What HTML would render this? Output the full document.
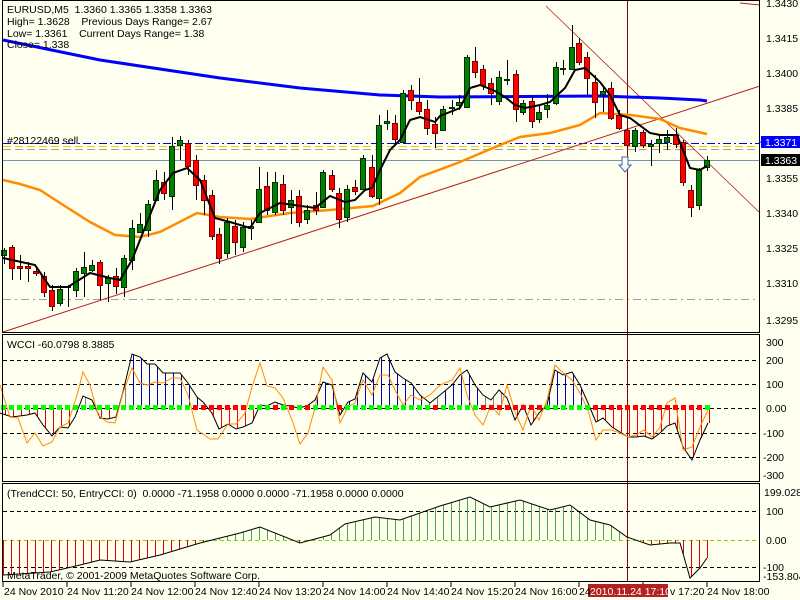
<!DOCTYPE html>
<html><head><meta charset="utf-8"><style>
html,body{margin:0;padding:0;background:#fffff0;width:800px;height:600px;overflow:hidden}
svg{display:block}
text{font-family:"Liberation Sans",sans-serif;font-size:10.5px;fill:#000;white-space:pre}
</style></head><body>
<svg id="s" width="800" height="600" xmlns="http://www.w3.org/2000/svg" shape-rendering="crispEdges">
<rect width="800" height="600" fill="#fffff0"/>
<g id="g"></g>
<rect x="2.5" y="0.5" width="757" height="332" fill="none" stroke="#000"/>
<rect x="2.5" y="334.5" width="757" height="147" fill="none" stroke="#000"/>
<rect x="2.5" y="483.5" width="757" height="98" fill="none" stroke="#000"/>
<text x="7" y="13">EURUSD,M5  1.3360 1.3365 1.3358 1.3363</text>
<text x="7" y="25">High= 1.3628    Previous Days Range= 2.67</text>
<text x="7" y="37">Low= 1.3361    Current Days Range= 1.38</text>
<text x="7" y="48">Close= 1.338</text>
<text x="7" y="144">#28122469 sell</text>
<text x="7" y="348">WCCI -60.0798 8.3885</text>
<text x="7" y="497">(TrendCCI: 50, EntryCCI: 0)  0.0000 -71.1958 0.0000 0.0000 -71.1958 0.0000 0.0000</text>
<text x="7" y="579">MetaTrader, © 2001-2009 MetaQuotes Software Corp.</text>
<g>
<text x="766" y="7">1.3430</text>
<text x="766" y="42">1.3415</text>
<text x="766" y="77">1.3400</text>
<text x="766" y="112">1.3385</text>
<rect x="761" y="136" width="39" height="12" fill="#0000ff"/>
<text x="765" y="146" style="fill:#fff">1.3371</text>
<rect x="761" y="154" width="39" height="12" fill="#000"/>
<text x="765" y="164" style="fill:#fff">1.3363</text>
<text x="766" y="182">1.3355</text>
<text x="766" y="217">1.3340</text>
<text x="766" y="252">1.3325</text>
<text x="766" y="287">1.3310</text>
<text x="766" y="324">1.3295</text>
<text x="766" y="346">300</text>
<text x="766" y="364">200</text>
<text x="766" y="388">100</text>
<text x="766" y="412">0.00</text>
<text x="763" y="437">-100</text>
<text x="763" y="461">-200</text>
<text x="763" y="479">-300</text>
<text x="764" y="496">199.0289</text>
<text x="766" y="515">100</text>
<text x="766" y="544">0.00</text>
<text x="763" y="571">-100</text>
<text x="763" y="580">-153.804</text>
</g>
<rect x="588" y="584" width="80" height="13" fill="#b22222"/>
<g>
<text x="4" y="595">24 Nov 2010</text>
<text x="67" y="595">24 Nov 11:20</text>
<text x="131" y="595">24 Nov 12:00</text>
<text x="195" y="595">24 Nov 12:40</text>
<text x="259" y="595">24 Nov 13:20</text>
<text x="323" y="595">24 Nov 14:00</text>
<text x="387" y="595">24 Nov 14:40</text>
<text x="451" y="595">24 Nov 15:20</text>
<text x="515" y="595">24 Nov 16:00</text>
<text x="579" y="595">24</text>
<text x="590" y="595" style="fill:#fff">2010.11.24 17:10</text>
<text x="670" y="595">v 17:20</text>
<text x="707" y="595">24 Nov 18:00</text>
</g>
</svg>
<script>
var g=document.getElementById('g');var NS='http://www.w3.org/2000/svg';
function el(t,a){var e=document.createElementNS(NS,t);for(var k in a)e.setAttribute(k,a[k]);g.appendChild(e);return e;}
function pl(pts,c,w,extra){var a={points:pts.map(function(p){return p.join(',')}).join(' '),fill:'none',stroke:c,'stroke-width':w,'shape-rendering':'auto'};for(var k in extra)a[k]=extra[k];return el('polyline',a);}
function hl(y,c,d){el('line',{x1:3,x2:760,y1:y,y2:y,stroke:c,'stroke-dasharray':d||''});}
for(var x=3;x<=707;x+=64){el('line',{x1:x,x2:x,y1:582,y2:587,stroke:'#000'});}
hl(160.5,'#7890a8');
hl(299.5,'#a0a0a0','8,4,2,4');
hl(149.5,'#a0a0a0','8,4');
hl(146.5,'#f0d000','8,4');
hl(143.5,'#0000ff','8,3,2,3');
el('line',{x1:760,x2:800,y1:142,y2:142,stroke:'#0000ff'});
[360,384,433,457].forEach(function(y){hl(y+.5,'#000','4,3')});
hl(408.5,'#000','4,3');
[511,567].forEach(function(y){hl(y+.5,'#000','4,3')});
el('line',{x1:3,x2:760,y1:540.5,y2:540.5,stroke:'#7fd000','stroke-dasharray':'4,3'});
el('line',{x1:627.5,x2:627.5,y1:0,y2:582,stroke:'#8b0000'});
el('line',{x1:3,y1:332,x2:760,y2:86,stroke:'#b22222','shape-rendering':'auto'});
el('line',{x1:546,y1:6,x2:760,y2:213,stroke:'#b22222','stroke-width':.8,'shape-rendering':'auto'});
el('line',{x1:740,y1:3,x2:760,y2:5,stroke:'#b22222','shape-rendering':'auto'});
pl([[3,40],[100,60],[220,78],[300,88],[380,95],[440,97],[600,96],[660,98],[700,100],[707,101]],'#0000ff',3);
pl([[3,180],[20,184],[40,190],[60,203],[90,222],[115,235],[140,237],[160,232],[197,213],[220,217],[250,219],[290,213],[330,210],[373,206],[400,193],[420,177],[460,162],[500,145],[520,137],[550,133],[580,125],[600,113],[630,115],[660,119],[680,128],[707,134]],'#ff8c00',2.5);
var C=[[4,250,255,248,264,'g'],[12,247,268,245,280,'r'],[20,266,268,255,280,'r'],[28,266,268,262,282,'r'],[36,271,273,268,276,'r'],[44,276,292,272,297,'r'],[52,290,306,285,311,'r'],[60,289,303,285,306,'g'],[68,286,287,285,307,'g'],[76,271,290,268,297,'g'],[84,267,273,252,297,'g'],[92,265,270,260,272,'g'],[100,262,285,260,300,'r'],[108,278,283,275,302,'g'],[116,276,286,268,294,'r'],[124,258,287,255,297,'g'],[132,228,260,220,270,'g'],[140,224,232,213,233,'g'],[148,204,230,200,237,'g'],[156,180,200,170,200,'g'],[164,182,193,172,200,'r'],[172,146,196,137,210,'g'],[180,140,145,136,160,'g'],[188,143,166,140,175,'r'],[196,160,185,155,200,'r'],[204,180,200,175,215,'r'],[212,195,236,190,240,'r'],[219,234,258,228,264,'r'],[227,222,253,218,258,'g'],[235,226,242,220,255,'r'],[243,227,247,222,252,'g'],[251,226,228,220,240,'g'],[259,189,222,167,222,'g'],[267,186,210,172,215,'r'],[275,182,212,172,215,'g'],[283,184,210,175,215,'r'],[291,200,207,190,224,'g'],[299,196,222,190,227,'r'],[307,210,219,205,224,'g'],[316,205,210,192,215,'r'],[323,172,207,170,207,'g'],[332,175,189,170,192,'r'],[339,193,219,188,228,'r'],[347,189,217,185,222,'g'],[355,187,191,180,195,'r'],[363,158,189,155,189,'g'],[372,167,196,155,198,'r'],[379,125,198,115,205,'g'],[387,121,123,110,130,'g'],[395,123,139,115,145,'r'],[403,93,142,90,142,'g'],[411,90,100,85,110,'r'],[419,102,111,78,115,'r'],[427,109,128,100,135,'r'],[435,124,133,117,148,'r'],[443,109,130,106,130,'g'],[452,107,108,100,115,'g'],[459,102,105,95,110,'g'],[467,57,107,55,107,'g'],[475,61,72,47,78,'r'],[483,69,85,65,90,'r'],[491,83,93,78,105,'r'],[499,77,101,71,105,'g'],[507,79,80,60,85,'g'],[516,74,109,70,122,'r'],[523,103,112,100,115,'g'],[532,101,121,96,128,'r'],[539,112,119,105,123,'g'],[547,105,109,94,118,'g'],[556,67,103,62,105,'g'],[563,68,69,60,75,'g'],[572,47,69,25,70,'g'],[579,43,62,38,65,'r'],[587,57,78,52,95,'r'],[595,82,102,75,118,'r'],[603,91,94,86,112,'g'],[611,88,118,82,120,'r'],[619,115,128,110,130,'r'],[627,130,145,128,148,'r'],[635,130,146,128,152,'g'],[643,132,145,130,148,'r'],[651,144,146,140,166,'g'],[659,139,143,134,153,'g'],[667,137,142,130,150,'g'],[676,135,144,128,148,'r'],[683,142,182,140,186,'r'],[691,190,207,185,217,'r'],[699,170,205,168,210,'g'],[707,160,167,156,171,'g']];
C.forEach(function(c){
 el('line',{x1:c[0]+.5,x2:c[0]+.5,y1:c[3],y2:c[4],stroke:'#000'});
 var h=Math.max(1,c[2]-c[1]);
 if(c[5]=='g')el('rect',{x:c[0]-2.5,y:c[1]+.5,width:5,height:h,fill:'#007f00',stroke:'#003000'});
 else el('rect',{x:c[0]-2.5,y:c[1]+.5,width:5,height:h,fill:'#ff0000',stroke:'#7f0000'});
});
pl([[3,258],[35,265],[50,287],[68,287],[90,273],[110,278],[120,280],[132,260],[150,215],[160,190],[173,173],[187,168],[200,180],[215,218],[230,222],[250,228],[260,213],[280,203],[315,208],[330,196],[345,202],[355,200],[365,190],[372,188],[380,170],[390,150],[400,140],[410,120],[420,117],[435,122],[440,116],[460,108],[470,88],[480,85],[495,91],[505,97],[515,105],[525,108],[540,105],[550,102],[565,88],[575,70],[585,68],[600,82],[610,95],[620,115],[630,118],[650,133],[660,135],[677,135],[690,168],[700,170],[707,166]],'#000',2);
el('path',{d:'M622 157 h6 v8 h3 l-6 7 l-6 -7 h3 z',fill:'#fff',stroke:'#4060a0','shape-rendering':'auto'});
var B=[[0,413],[12,417],[27,415],[35,413],[43,425],[52,436],[60,427],[68,428],[75,417],[83,396],[92,400],[100,418],[108,419],[116,417],[123,392],[132,354],[140,357],[147,364],[155,364],[163,373],[172,373],[180,373],[188,383],[197,397],[203,402],[212,413],[219,429],[228,424],[236,429],[243,427],[252,423],[260,405],[267,406],[275,402],[283,405],[290,406],[298,408],[307,406],[315,400],[323,382],[332,385],[340,415],[348,402],[355,399],[363,373],[372,382],[380,358],[387,354],[395,372],[403,378],[411,383],[420,395],[430,403],[440,395],[452,385],[460,375],[467,370],[475,385],[483,395],[491,400],[499,390],[507,398],[515,420],[523,405],[531,425],[539,413],[547,405],[555,370],[563,375],[572,372],[580,385],[588,403],[596,422],[603,418],[612,427],[620,432],[628,437],[636,437],[644,436],[652,439],[660,433],[667,426],[675,423],[683,447],[692,460],[700,440],[708,423]];
function interp(P,x){for(var i=1;i<P.length;i++){if(x<=P[i][0]){var a=P[i-1],b=P[i];return a[1]+(b[1]-a[1])*(x-a[0])/(b[0]-a[0]);}}return P[P.length-1][1];}
function isRed(x){return (x>=195&&x<=250)||(x>=262&&x<=320&&((x/8|0)%2==0))||(x>=336&&x<=344)||(x>=428&&x<=442)||(x>=478&&x<=542)||(x>=588&&x<=702);}
for(var x=5;x<=709;x+=8){var y=interp(B,x);var red=isRed(x);
 var col=y>408?(red?'#ff0000':'#e00000'):(x>150&&x<200?'#0000c0':(red?'#808080':'#0000c0'));
 if(x<130&&y<408)col='#808080';
 el('line',{x1:x+.5,x2:x+.5,y1:408,y2:y,stroke:col});}
pl(B,'#000',1);
pl([[0,385],[10,417],[18,418],[27,443],[35,433],[43,446],[52,442],[60,427],[68,423],[77,395],[83,372],[90,385],[98,415],[107,422],[115,423],[123,393],[132,368],[140,383],[147,385],[155,382],[163,383],[172,378],[180,378],[188,395],[197,430],[210,439],[218,439],[228,424],[236,424],[245,413],[252,387],[260,363],[267,386],[275,388],[283,398],[292,420],[300,444],[308,433],[315,408],[323,367],[332,380],[340,423],[348,407],[355,403],[363,380],[372,395],[380,375],[388,375],[395,390],[403,405],[411,395],[420,400],[430,395],[440,385],[452,380],[460,368],[467,395],[475,415],[483,425],[491,405],[499,415],[507,385],[515,412],[523,430],[531,405],[539,420],[547,400],[555,365],[560,370],[572,380],[580,393],[588,410],[596,440],[603,430],[612,430],[620,433],[628,437],[636,435],[644,430],[652,437],[660,427],[667,403],[675,398],[683,450],[692,447],[700,427],[708,410]],'#ff8c00',1);
for(var x=3;x<=707;x+=8){el('rect',{x:x-2,y:405,width:5,height:5,fill:isRed(x)?'#ff0000':'#00ff00'});}
var T=[[3,575],[50,572],[80,565],[100,560],[130,562],[160,555],[200,543],[240,533],[260,527],[300,543],[330,535],[345,524],[375,517],[400,520],[440,506],[470,497],[490,507],[520,500],[550,510],[570,505],[590,520],[610,525],[627,537],[650,545],[670,543],[680,543],[690,578],[700,568],[707,558]];
for(var x=3;x<=707;x+=8){var y=interp(T,x);el('rect',{x:x,y:Math.min(540,y),width:1,height:Math.abs(y-540),fill:y<540?'#40b030':'#e00000'});}
pl(T,'#000',1);
</script>
</body></html>
